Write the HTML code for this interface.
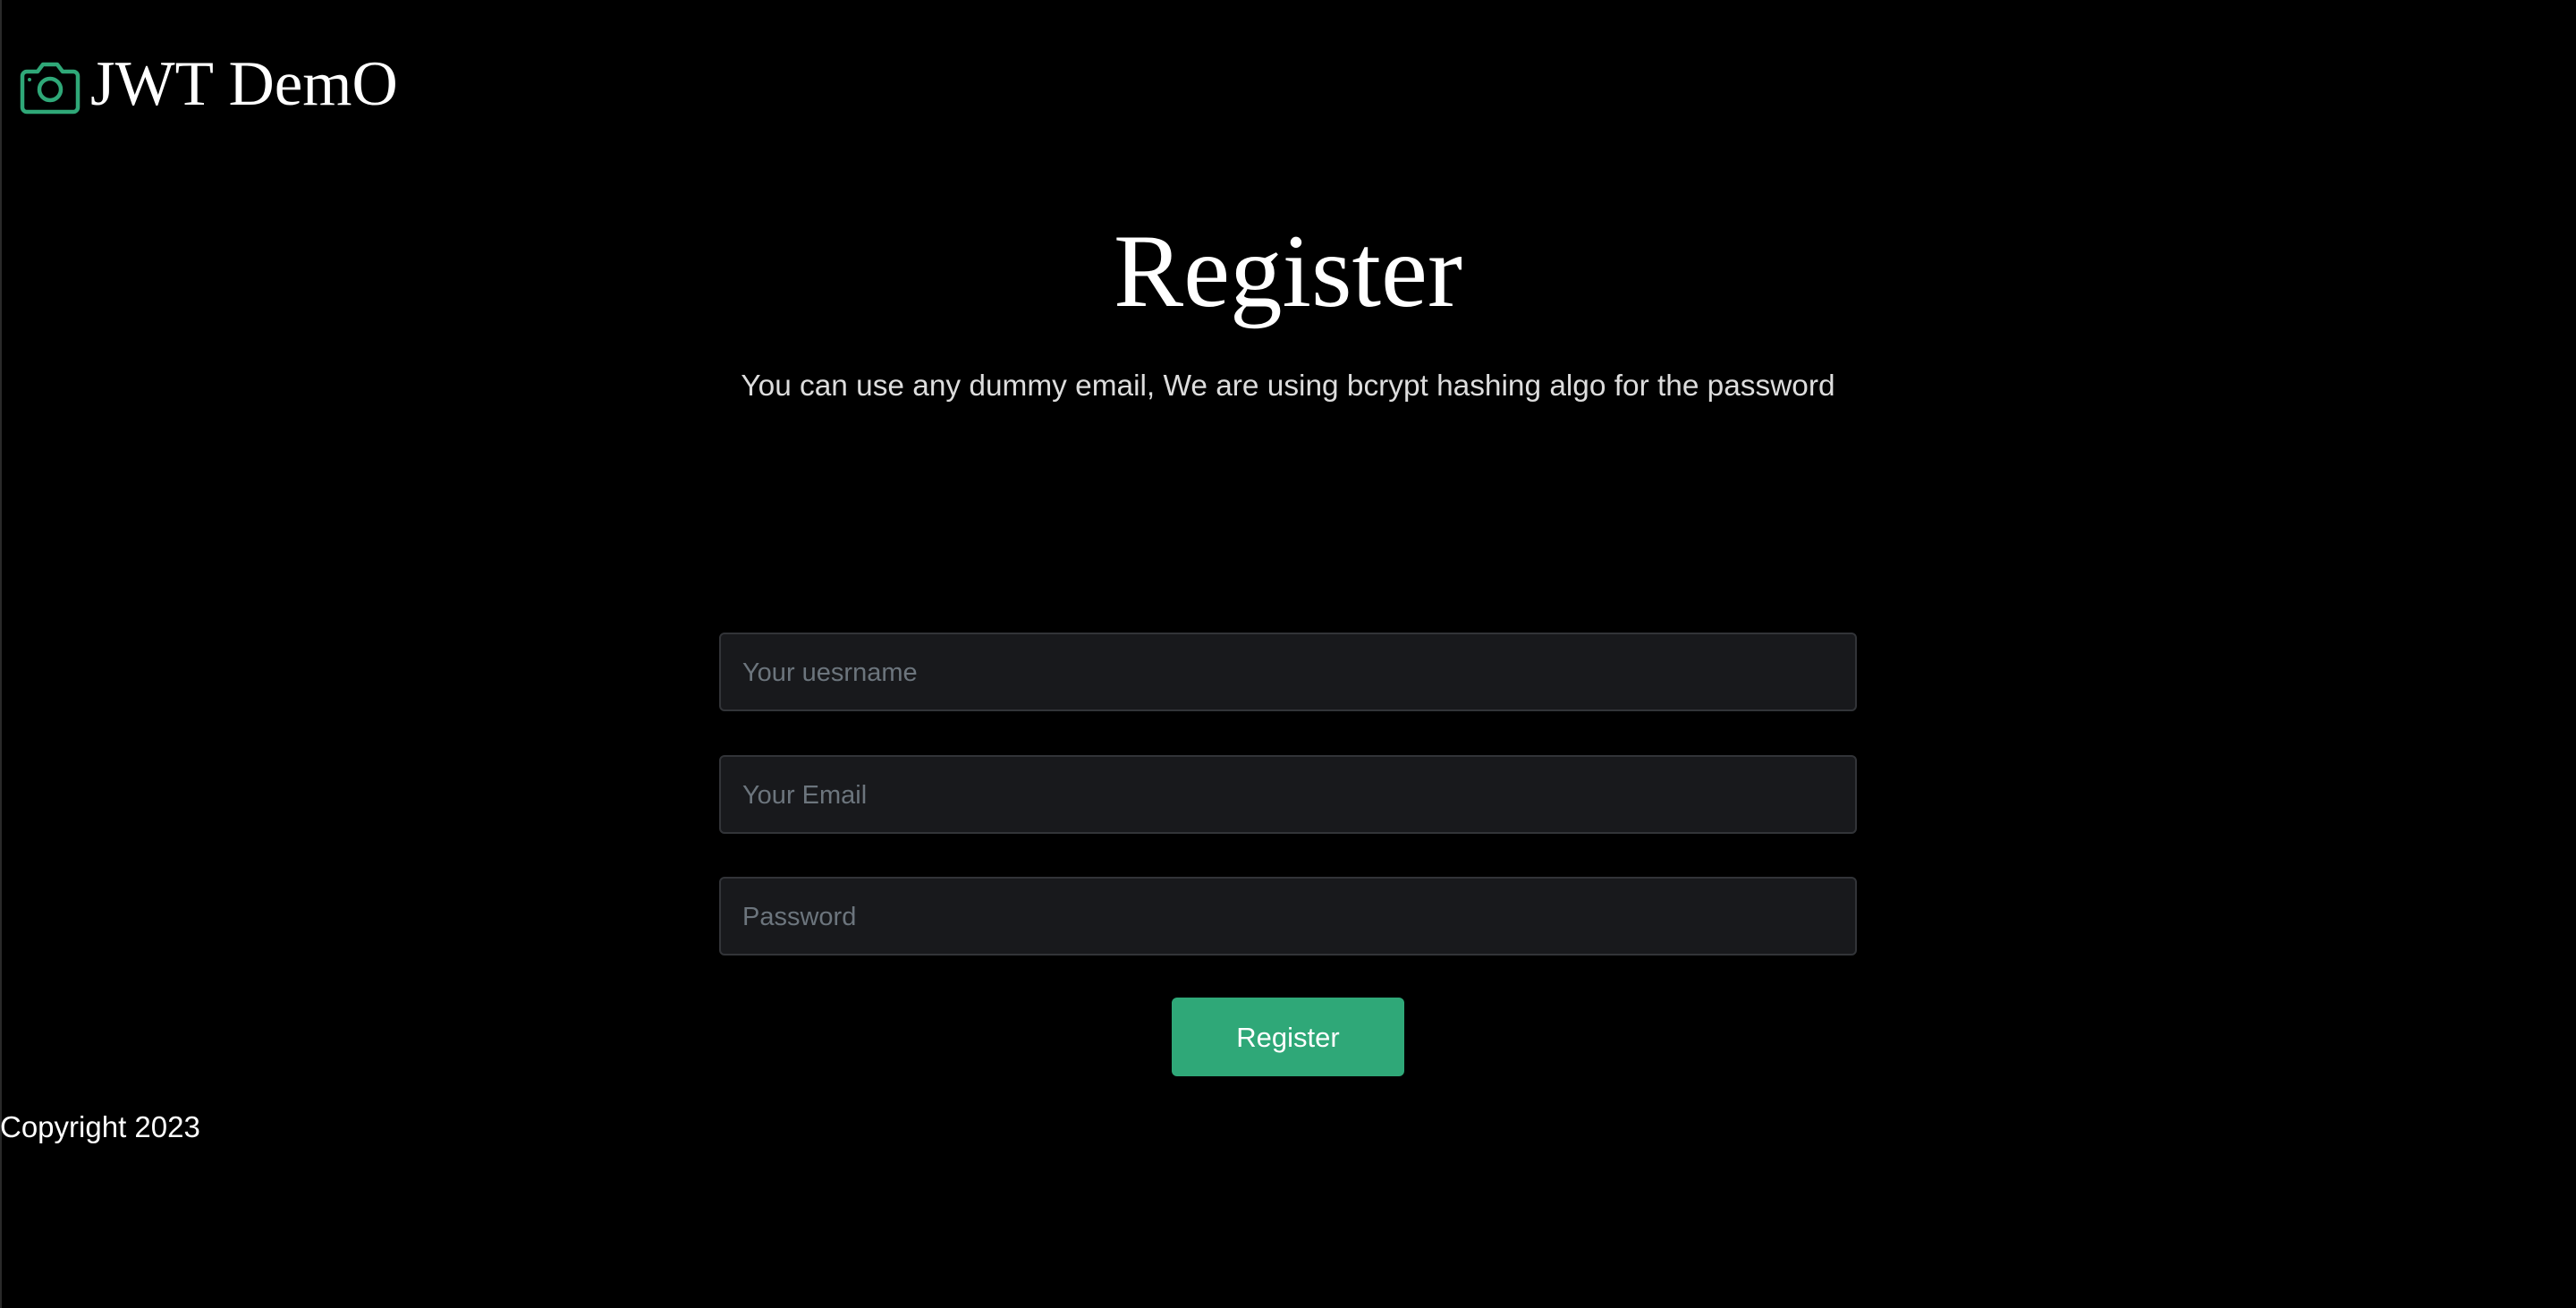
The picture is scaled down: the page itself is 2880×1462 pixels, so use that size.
<!DOCTYPE html>
<html><head><meta charset="utf-8"><style>
html,body{margin:0;padding:0;background:#000;width:2880px;height:1462px;overflow:hidden;position:relative}
body{font-family:"Liberation Sans",sans-serif}
.edge{position:absolute;left:0;top:0;width:2px;height:1462px;background:#2a2a2a}
.abs{position:absolute;white-space:nowrap}
.logo{left:101px;top:54px;font-family:"Liberation Serif",serif;font-size:71px;color:#fff;line-height:80px}
.title{left:0;width:2880px;text-align:center;top:239px;font-family:"Liberation Serif",serif;font-size:117px;color:#fff;line-height:130px}
.sub{left:0;width:2880px;text-align:center;top:410px;font-size:33.4px;color:#ddd;line-height:44px}
.inp{left:804px;width:1272px;height:88px;box-sizing:border-box;background:#18191c;border:2px solid #323438;border-radius:6px;color:#6c757d;font-size:29px;padding-left:24px;line-height:86px}
.btn{left:1310px;top:1115px;width:260px;height:88px;background:#2fa878;border-radius:6px;color:#fff;font-size:31px;text-align:center;line-height:90px}
.copy{left:0;top:1240px;font-size:33px;color:#fff;line-height:40px}
</style></head><body>
<div class="edge"></div>
<svg class="abs" style="left:22px;top:68px" width="68" height="60" viewBox="0 0 68 60" fill="none" stroke="#2fa878" stroke-width="4.5" stroke-linejoin="round">
<path d="M8 12 H20 L26 4 H42 L48 12 H60 A5 5 0 0 1 65 17 V52 A5 5 0 0 1 60 57 H8 A5 5 0 0 1 3 52 V17 A5 5 0 0 1 8 12 Z"/>
<circle cx="34" cy="32" r="12"/>
<circle cx="11" cy="21" r="1.5" fill="#2fa878" stroke-width="1"/>
</svg>
<div class="abs logo">JWT DemO</div>
<div class="abs title">Register</div>
<div class="abs sub">You can use any dummy email, We are using bcrypt hashing algo for the password</div>
<div class="abs inp" style="top:707px">Your uesrname</div>
<div class="abs inp" style="top:844px">Your Email</div>
<div class="abs inp" style="top:980px">Password</div>
<div class="abs btn">Register</div>
<div class="abs copy">Copyright 2023</div>
</body></html>
